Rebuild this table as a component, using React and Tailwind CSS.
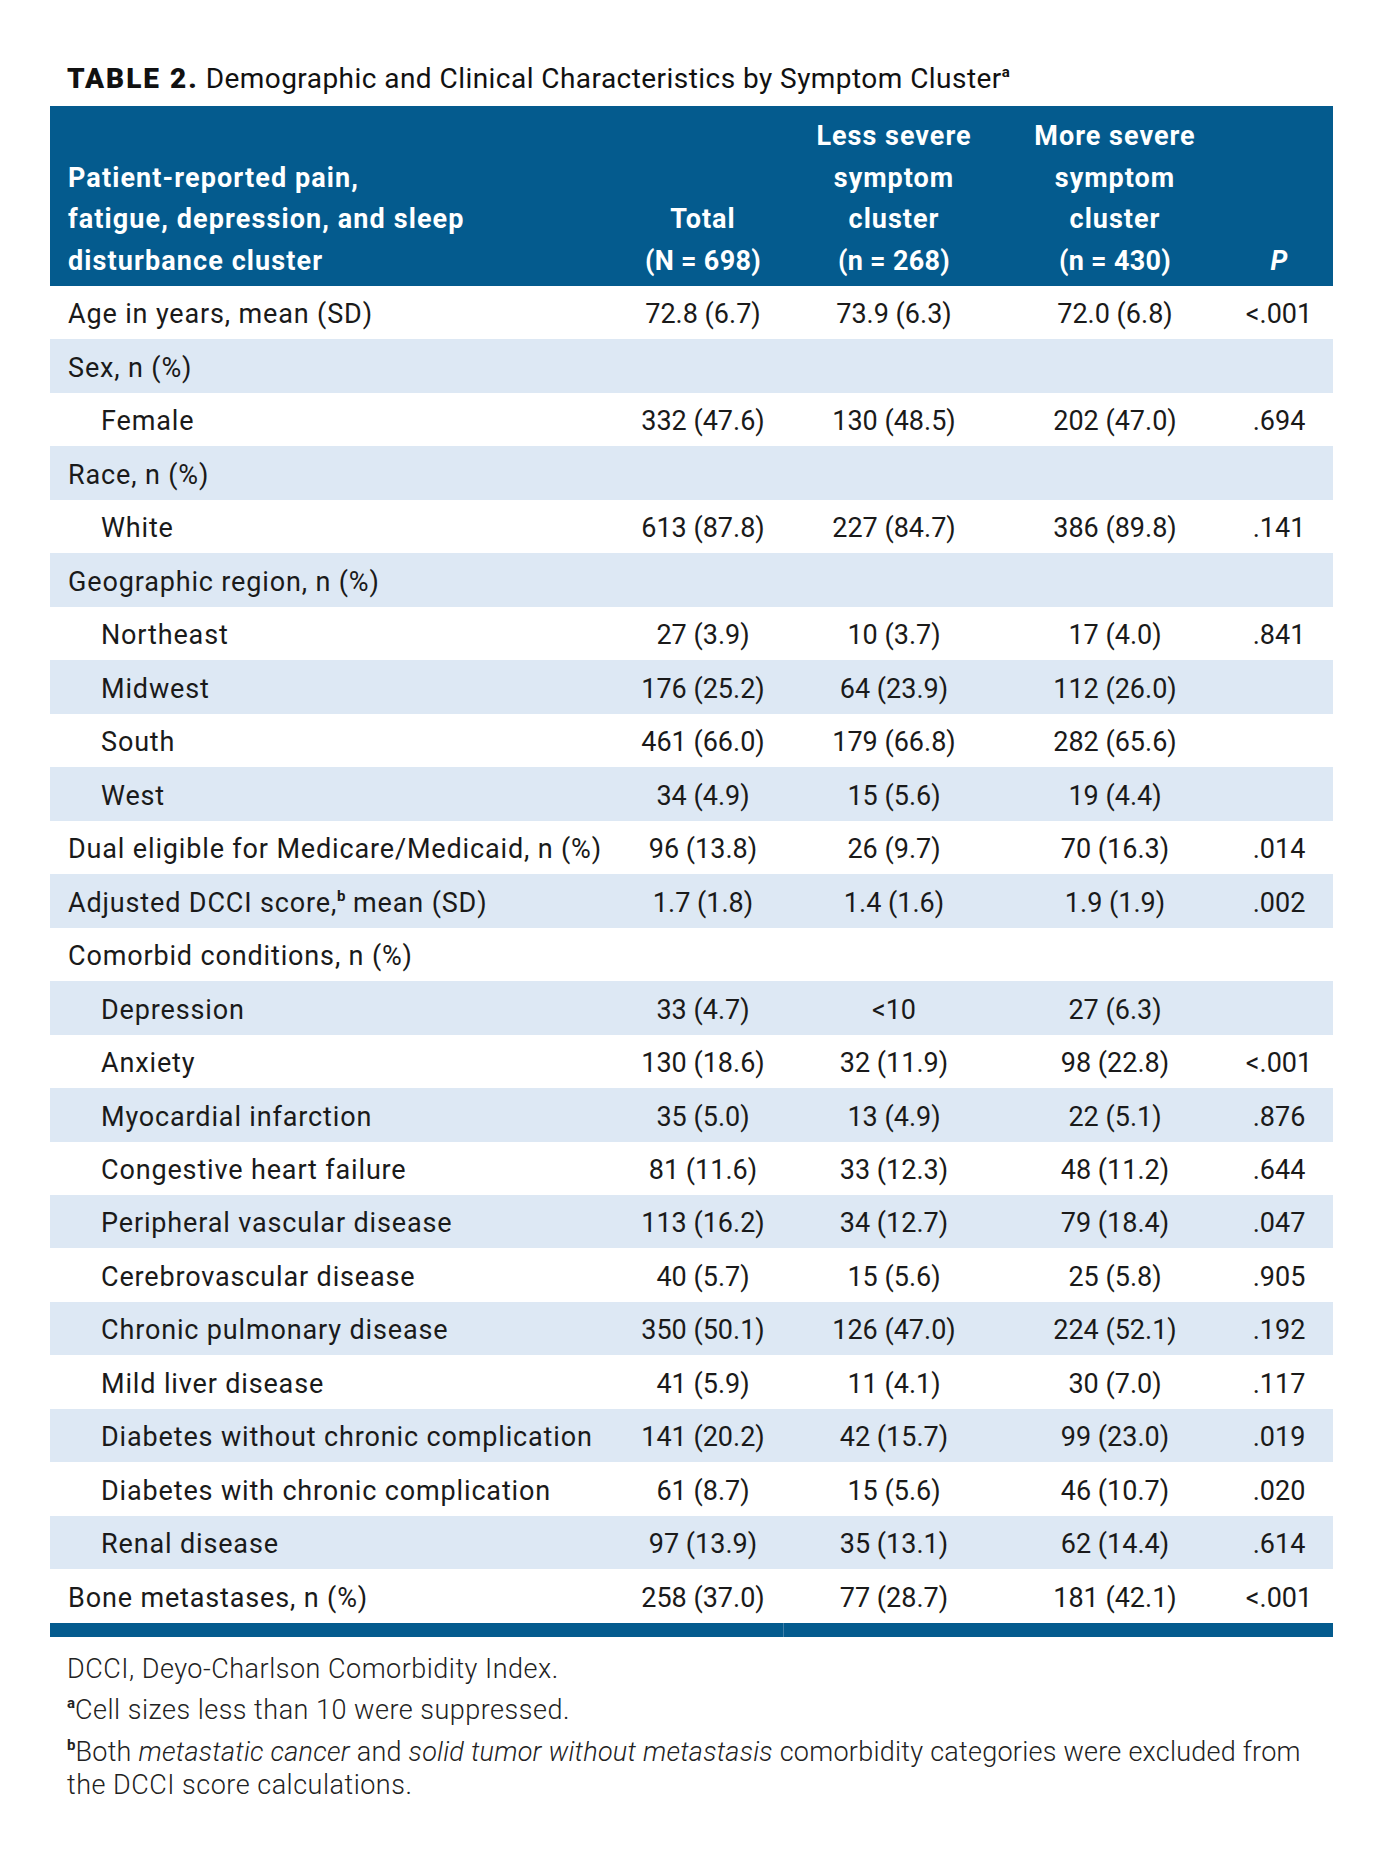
import React from "react";

const rows = [
  { label: "Age in years, mean (SD)", v: ["72.8 (6.7)", "73.9 (6.3)", "72.0 (6.8)", "<.001"] },
  { label: "Sex, n (%)", v: ["", "", "", ""] },
  { label: "Female", indent: true, v: ["332 (47.6)", "130 (48.5)", "202 (47.0)", ".694"] },
  { label: "Race, n (%)", v: ["", "", "", ""] },
  { label: "White", indent: true, v: ["613 (87.8)", "227 (84.7)", "386 (89.8)", ".141"] },
  { label: "Geographic region, n (%)", v: ["", "", "", ""] },
  { label: "Northeast", indent: true, v: ["27 (3.9)", "10 (3.7)", "17 (4.0)", ".841"] },
  { label: "Midwest", indent: true, v: ["176 (25.2)", "64 (23.9)", "112 (26.0)", ""] },
  { label: "South", indent: true, v: ["461 (66.0)", "179 (66.8)", "282 (65.6)", ""] },
  { label: "West", indent: true, v: ["34 (4.9)", "15 (5.6)", "19 (4.4)", ""] },
  { label: "Dual eligible for Medicare/Medicaid, n (%)", v: ["96 (13.8)", "26 (9.7)", "70 (16.3)", ".014"] },
  { label: "ADJ", v: ["1.7 (1.8)", "1.4 (1.6)", "1.9 (1.9)", ".002"] },
  { label: "Comorbid conditions, n (%)", v: ["", "", "", ""] },
  { label: "Depression", indent: true, v: ["33 (4.7)", "<10", "27 (6.3)", ""] },
  { label: "Anxiety", indent: true, v: ["130 (18.6)", "32 (11.9)", "98 (22.8)", "<.001"] },
  { label: "Myocardial infarction", indent: true, v: ["35 (5.0)", "13 (4.9)", "22 (5.1)", ".876"] },
  { label: "Congestive heart failure", indent: true, v: ["81 (11.6)", "33 (12.3)", "48 (11.2)", ".644"] },
  { label: "Peripheral vascular disease", indent: true, v: ["113 (16.2)", "34 (12.7)", "79 (18.4)", ".047"] },
  { label: "Cerebrovascular disease", indent: true, v: ["40 (5.7)", "15 (5.6)", "25 (5.8)", ".905"] },
  { label: "Chronic pulmonary disease", indent: true, v: ["350 (50.1)", "126 (47.0)", "224 (52.1)", ".192"] },
  { label: "Mild liver disease", indent: true, v: ["41 (5.9)", "11 (4.1)", "30 (7.0)", ".117"] },
  { label: "Diabetes without chronic complication", indent: true, v: ["141 (20.2)", "42 (15.7)", "99 (23.0)", ".019"] },
  { label: "Diabetes with chronic complication", indent: true, v: ["61 (8.7)", "15 (5.6)", "46 (10.7)", ".020"] },
  { label: "Renal disease", indent: true, v: ["97 (13.9)", "35 (13.1)", "62 (14.4)", ".614"] },
  { label: "Bone metastases, n (%)", v: ["258 (37.0)", "77 (28.7)", "181 (42.1)", "<.001"] },
];

const font = { fontFamily: "Roboto, 'Liberation Sans', sans-serif" };

function Sup({ children }) {
  return (
    <span className="text-[15px] font-bold leading-none relative top-[-11px] tracking-normal not-italic">{children}</span>
  );
}

export default function App() {
  return (
    <div className="min-h-[1860px] w-[1383px] bg-white text-[#1a1a1a]" style={font}>
      <div className="pt-[62px] pl-[50px] w-[1333px]">
        <h1 className="h-[34px] leading-[34px] text-[28px] pl-[17px] text-[#111] whitespace-nowrap">
          <span className="font-black tracking-[2px]">TABLE 2.</span>{" "}
          <span className="font-normal tracking-[0.45px]">
            Demographic and Clinical Characteristics by Symptom Cluster
          </span>
          <Sup>a</Sup>
        </h1>

        <div className="mt-[10px]">
          <div className="grid grid-cols-[573px_160px_222px_220px_108px] bg-[#045b8e] text-white font-bold text-[27px] leading-[41.5px] h-[180px] items-end pb-[4px] whitespace-nowrap">
            <div className="pl-[18px] tracking-[1.1px]">
              Patient-reported pain,
              <br />
              fatigue, depression, and sleep
              <br />
              disturbance cluster
            </div>
            <div className="text-center">
              <span className="tracking-[1px]">Total</span>
              <br />
              <span className="tracking-[0.3px]">(N = 698)</span>
            </div>
            <div className="text-center">
              <span className="tracking-[1px]">Less severe</span>
              <br />
              <span className="tracking-[1px]">symptom</span>
              <br />
              <span className="tracking-[1px]">cluster</span>
              <br />
              <span className="tracking-[0.3px]">(n = 268)</span>
            </div>
            <div className="text-center">
              <span className="tracking-[1px]">More severe</span>
              <br />
              <span className="tracking-[1px]">symptom</span>
              <br />
              <span className="tracking-[1px]">cluster</span>
              <br />
              <span className="tracking-[0.3px]">(n = 430)</span>
            </div>
            <div className="text-center italic">P</div>
          </div>

          {rows.map((r, i) => (
            <div
              key={i}
              className={`grid grid-cols-[573px_160px_222px_220px_108px] h-[53.48px] pt-[4px] items-center text-[27px] ${
                i % 2 === 1 ? "bg-[#dde8f4]" : "bg-white"
              }`}
            >
              <div
                className={
                  r.indent
                    ? "pl-[51px] whitespace-nowrap tracking-[0.85px]"
                    : "pl-[18px] whitespace-nowrap tracking-[0.85px]"
                }
              >
                {r.label === "ADJ" ? (
                  <>
                    Adjusted DCCI score,<Sup>b</Sup> mean (SD)
                  </>
                ) : (
                  r.label
                )}
              </div>
              {r.v.map((c, j) => (
                <div key={j} className="text-center whitespace-nowrap">
                  {c}
                </div>
              ))}
            </div>
          ))}

          <div className="flex h-[14px]">
            <div className="w-[733px] bg-[#045b8e]" />
            <div className="w-px bg-[#3f7fa8]" />
            <div className="flex-1 bg-[#045b8e]" />
          </div>
        </div>

        <div className="pl-[17px] pt-[16px] text-[27px] leading-[33px] text-[#222] font-light tracking-[0.5px] whitespace-nowrap">
          <p>DCCI, Deyo-Charlson Comorbidity Index.</p>
          <p className="mt-[8px]">
            <Sup>a</Sup>Cell sizes less than 10 were suppressed.
          </p>
          <p className="mt-[9px] tracking-[0.25px]">
            <Sup>b</Sup>Both <i>metastatic cancer</i> and <i>solid tumor without metastasis</i> comorbidity
            categories were excluded from
            <br />
            <span className="tracking-[0.5px]">the DCCI score calculations.</span>
          </p>
        </div>
      </div>
    </div>
  );
}
